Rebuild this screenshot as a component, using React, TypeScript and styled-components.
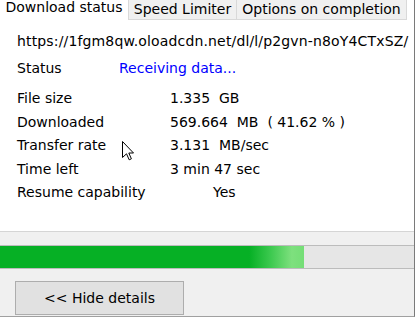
import React from "react";
import styled, { createGlobalStyle } from "styled-components";

const Global = createGlobalStyle`
  html, body { margin: 0; padding: 0; background: #f0f0f0; }
  body { font-family: "DejaVu Sans", Verdana, sans-serif; font-size: 14px; color: #000; }
`;

const Window = styled.div`
  position: relative;
  width: 414px;
  height: 316px;
  background: #f0f0f0;
  border-right: 1px solid #7a7a7a;
  border-bottom: 1px solid #a0a0a0;
  display: flex;
  flex-direction: column;
  overflow: hidden;
`;

const TabBar = styled.div`
  display: flex;
  height: 20px;
  background: #fff;
  flex: none;
`;

const Tab = styled.div<{ $active?: boolean; $w: number; $first?: boolean }>`
  box-sizing: border-box;
  width: ${(p) => p.$w}px;
  height: 20px;
  display: flex;
  justify-content: center;
  align-items: flex-start;
  line-height: 15px;
  white-space: nowrap;
  padding-top: ${(p) => (p.$active ? 0 : 2)}px;
  background: ${(p) => (p.$active ? "#fff" : "#f0f0f0")};
  border-left: ${(p) => (p.$active || p.$first ? "none" : "1px solid #d9d9d9")};
  border-right: ${(p) => (p.$active ? "none" : "1px solid #d9d9d9")};
  border-bottom: ${(p) => (p.$active ? "none" : "1px solid #d9d9d9")};
`;

const Panel = styled.div`
  box-sizing: border-box;
  height: 212px;
  background: #fff;
  border-bottom: 1px solid #d5d5d5;
  padding: 10px 0 0 17px;
  flex: none;
`;

const Url = styled.div`
  line-height: 23px;
  white-space: nowrap;
  letter-spacing: 0.15px;
`;

const StatusRow = styled.div`
  display: grid;
  grid-template-columns: 102px auto;
  line-height: 23px;
  margin-top: 4px;
`;

const StatusValue = styled.span`
  color: #0000ff;
`;

const InfoGrid = styled.div`
  display: grid;
  grid-template-columns: 153px auto;
  grid-auto-rows: 23.5px;
  line-height: 23.5px;
  margin-top: 7px;
  white-space: pre;
`;

const Value = styled.span<{ $indent?: number }>`
  padding-left: ${(p) => p.$indent ?? 0}px;
`;

const Progress = styled.div`
  margin-top: 13px;
  height: 22px;
  border-top: 1px solid #bcbcbc;
  border-bottom: 1px solid #bcbcbc;
  background: #e6e6e6;
  flex: none;
  display: flex;
`;

const Fill = styled.div`
  height: 100%;
  background: linear-gradient(
    to right,
    #06b025 0%,
    #06b025 82%,
    #3cc94f 89%,
    #7ee07e 96%,
    #74de76 100%
  );
`;

const ButtonBar = styled.div`
  padding: 12px 0 0 15px;
`;

const Button = styled.button`
  box-sizing: border-box;
  width: 169px;
  height: 34px;
  background: #e1e1e1;
  border: 1px solid #adadad;
  font-family: "DejaVu Sans", Verdana, sans-serif;
  font-size: 14px;
  color: #000;
  padding: 0;
  line-height: 32px;
  border-radius: 0;
`;

const Cursor = styled.svg`
  position: absolute;
  left: 122px;
  top: 141px;
`;

const rows: [string, string, number?][] = [
  ["File size", "1.335  GB"],
  ["Downloaded", "569.664  MB  ( 41.62 % )"],
  ["Transfer rate", "3.131  MB/sec"],
  ["Time left", "3 min 47 sec"],
  ["Resume capability", "Yes", 43],
];

export default function App() {
  return (
    <>
      <Global />
      <Window>
        <TabBar>
          <Tab $active $w={128}>Download status</Tab>
          <Tab $w={109}>Speed Limiter</Tab>
          <Tab $w={170} $first>Options on completion</Tab>
        </TabBar>
        <Panel>
          <Url>https://1fgm8qw.oloadcdn.net/dl/l/p2gvn-n8oY4CTxSZ/</Url>
          <StatusRow>
            <span>Status</span>
            <StatusValue>Receiving data...</StatusValue>
          </StatusRow>
          <InfoGrid>
            {rows.map(([k, v, ind]) => (
              <React.Fragment key={k}>
                <span>{k}</span>
                <Value $indent={ind}>{v}</Value>
              </React.Fragment>
            ))}
          </InfoGrid>
        </Panel>
        <Progress>
          <Fill style={{ width: "304px" }} />
        </Progress>
        <ButtonBar>
          <Button>&lt;&lt; Hide details</Button>
        </ButtonBar>
        <Cursor width="13" height="20" viewBox="0 0 13 20">
          <path
            d="M0.5 0.5 L0.5 16.5 L4.5 12.8 L7.2 18.8 L9.4 17.8 L6.8 12 L11.5 12 Z"
            fill="#fff"
            stroke="#000"
            strokeWidth="1"
            strokeLinejoin="miter"
          />
        </Cursor>
      </Window>
    </>
  );
}
